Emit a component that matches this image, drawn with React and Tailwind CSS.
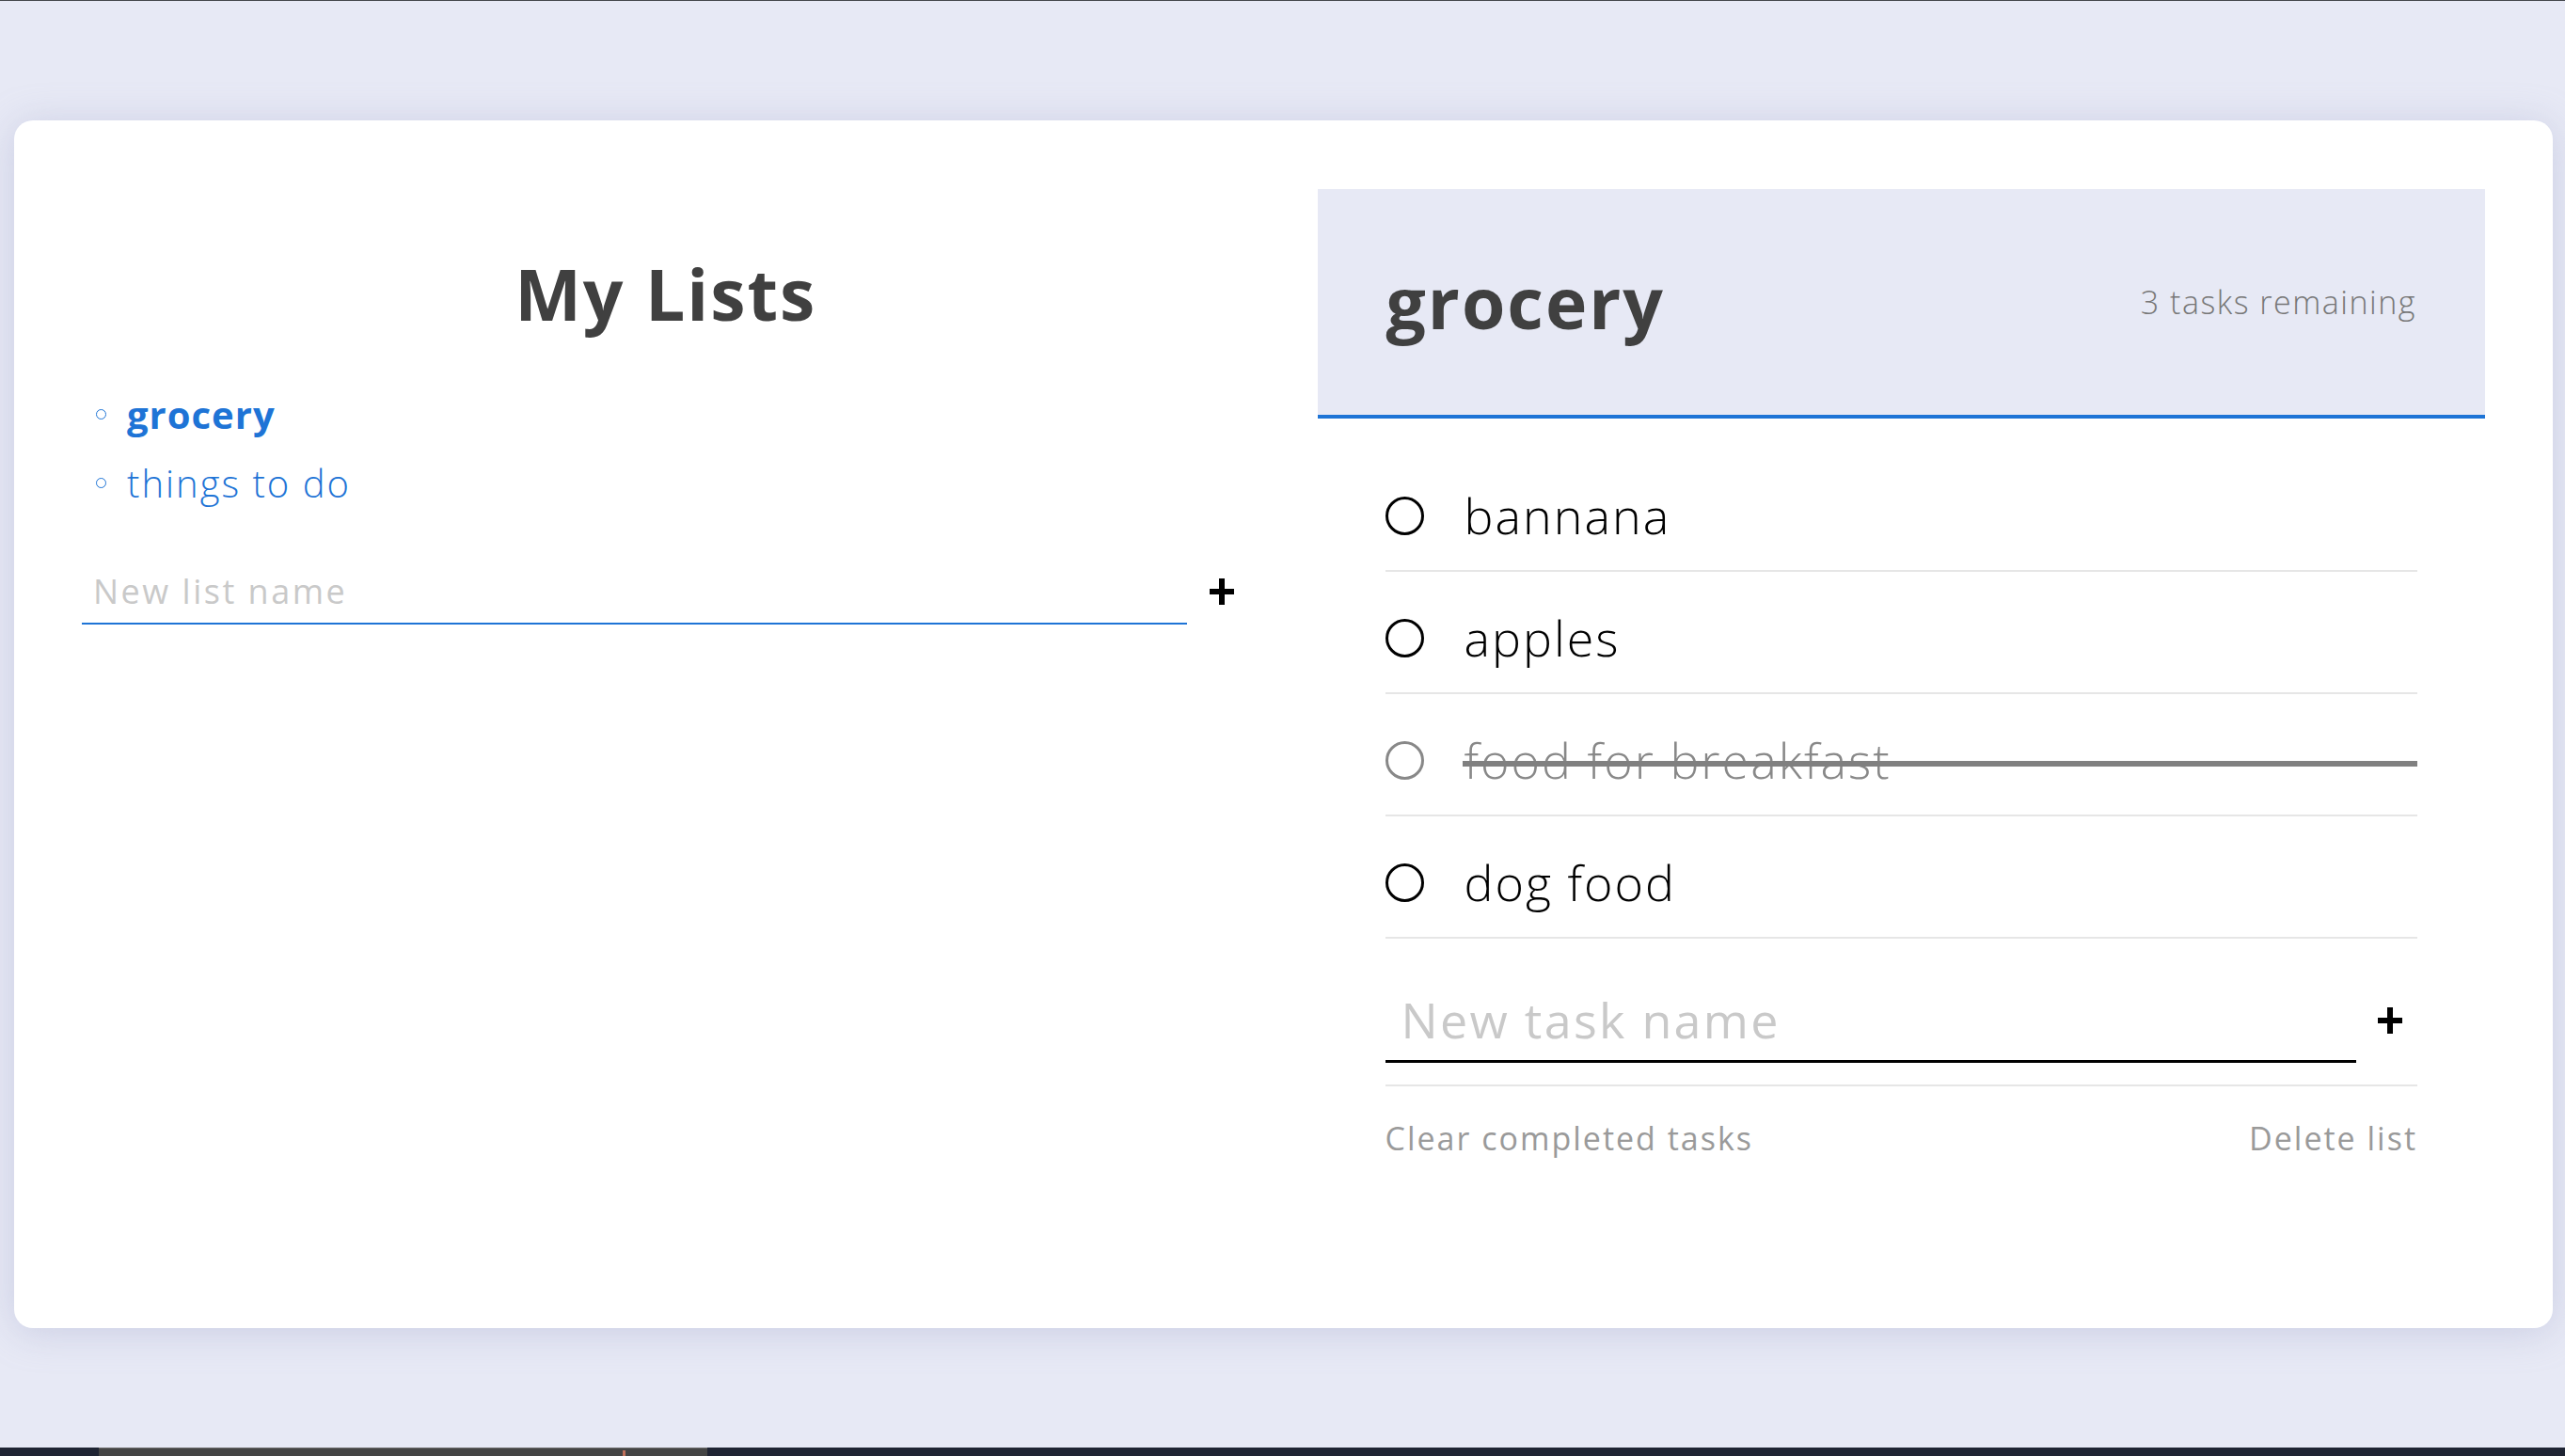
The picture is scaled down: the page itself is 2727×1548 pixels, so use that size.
import React from "react";

const lists = [
  { id: 1, name: "grocery", active: true },
  { id: 2, name: "things to do", active: false },
];

const tasks = [
  { id: 1, name: "bannana", done: false },
  { id: 2, name: "apples", done: false },
  { id: 3, name: "food for breakfast", done: true },
  { id: 4, name: "dog food", done: false },
];

const PlusIcon = () => (
  <svg width="26" height="28" viewBox="0 0 26 28" fill="currentColor">
    <rect x="0" y="11" width="26" height="6" />
    <rect x="10" y="0" width="6" height="28" />
  </svg>
);

export default function App() {
  return (
    <div
      className="h-screen flex flex-col bg-[#e7e9f5] overflow-hidden"
      style={{ fontFamily: '"Open Sans", "Noto Sans", sans-serif' }}
    >
      {/* top edge */}
      <div className="h-px bg-[#44474c]" />

      <div className="flex-1 pt-[127px] pl-[15px] pr-[13px]">
        <div className="h-[1284px] bg-white rounded-[20px] shadow-[0_4px_40px_rgba(150,156,196,0.35)] pt-[73px] px-[72px] grid grid-cols-2 gap-[72px] items-start">
          {/* My Lists */}
          <div>
            <h1 className="mt-[74px] text-center text-[75px] font-bold leading-none tracking-[2px] text-[#404040]">
              My Lists
            </h1>
            <ul className="mt-[54px]">
              {lists.map((list) => (
                <li key={list.id} className="h-[73px] flex items-center text-[#1e74d6]">
                  <span className="ml-[15px] mr-[22px] w-[11px] h-[11px] rounded-full border-[1.5px] border-[#1e74d6]" />
                  <span
                    className={`text-[40px] leading-none ${
                      list.active ? "font-bold tracking-[1px]" : "font-light tracking-[2px]"
                    }`}
                  >
                    {list.name}
                  </span>
                </li>
              ))}
            </ul>
            <form className="mt-[44px] flex items-center" onSubmit={(e) => e.preventDefault()}>
              <input
                type="text"
                placeholder="New list name"
                className="flex-1 h-[70px] pl-[12px] border-b-2 border-[#1e74d6] bg-transparent outline-none text-[36px] tracking-[2.5px] text-[#333] placeholder:text-[#c9c9c9]"
              />
              <button type="submit" className="w-[67px] pl-[8px] flex justify-center text-black">
                <PlusIcon />
              </button>
            </form>
          </div>

          {/* Active list */}
          <div>
            <div className="h-[244px] bg-[#e7e9f5] border-b-4 border-[#1e74d6] px-[73px] flex items-center justify-between">
              <h2 className="text-[75px] font-bold leading-none tracking-[2px] text-[#404040]">grocery</h2>
              <p className="text-[34px] font-light leading-none tracking-[1.5px] text-[#777]">
                3 tasks remaining
              </p>
            </div>

            <div className="px-[72px] pt-[33px]">
              {tasks.map((task) => (
                <div
                  key={task.id}
                  className="relative h-[130px] pt-[12px] border-b-2 border-[#e6e6e6] flex items-center"
                >
                  <span
                    className={`w-[41px] h-[41px] rounded-full border-[3px] ${
                      task.done ? "border-[#888]" : "border-black"
                    }`}
                  />
                  <span
                    className={`ml-[43px] text-[52px] font-light leading-none tracking-[2px] ${
                      task.done ? "text-[#888] line-through decoration-1" : "text-black"
                    }`}
                  >
                    {task.name}
                  </span>
                  {task.done && (
                    <span className="absolute left-[82px] right-0 top-[71px] h-[6px] bg-[#808080]" />
                  )}
                </div>
              ))}

              <form
                className="pt-[42px] pb-[23px] border-b-2 border-[#e6e6e6] flex items-center"
                onSubmit={(e) => e.preventDefault()}
              >
                <input
                  type="text"
                  placeholder="New task name"
                  className="flex-1 h-[90px] pl-[17px] border-b-[3px] border-black bg-transparent outline-none text-[52px] tracking-[2.3px] text-black placeholder:text-[#c9c9c9]"
                />
                <button type="submit" className="w-[65px] pl-[6px] flex justify-center text-black">
                  <PlusIcon />
                </button>
              </form>

              <div className="mt-[38px] flex justify-between text-[34px] leading-none tracking-[2px] text-[#9a9a9a]">
                <button type="button">Clear completed tasks</button>
                <button type="button">Delete list</button>
              </div>
            </div>
          </div>
        </div>
      </div>

      {/* taskbar */}
      <div className="h-[9px] bg-[#1f2433] flex">
        <div className="ml-[105px] w-[647px] bg-[#444] border-t border-[#6a6a6a] relative">
          <span className="absolute left-[557px] top-[2px] w-[3px] h-[7px] bg-[#c0705a]" />
        </div>
      </div>
    </div>
  );
}
